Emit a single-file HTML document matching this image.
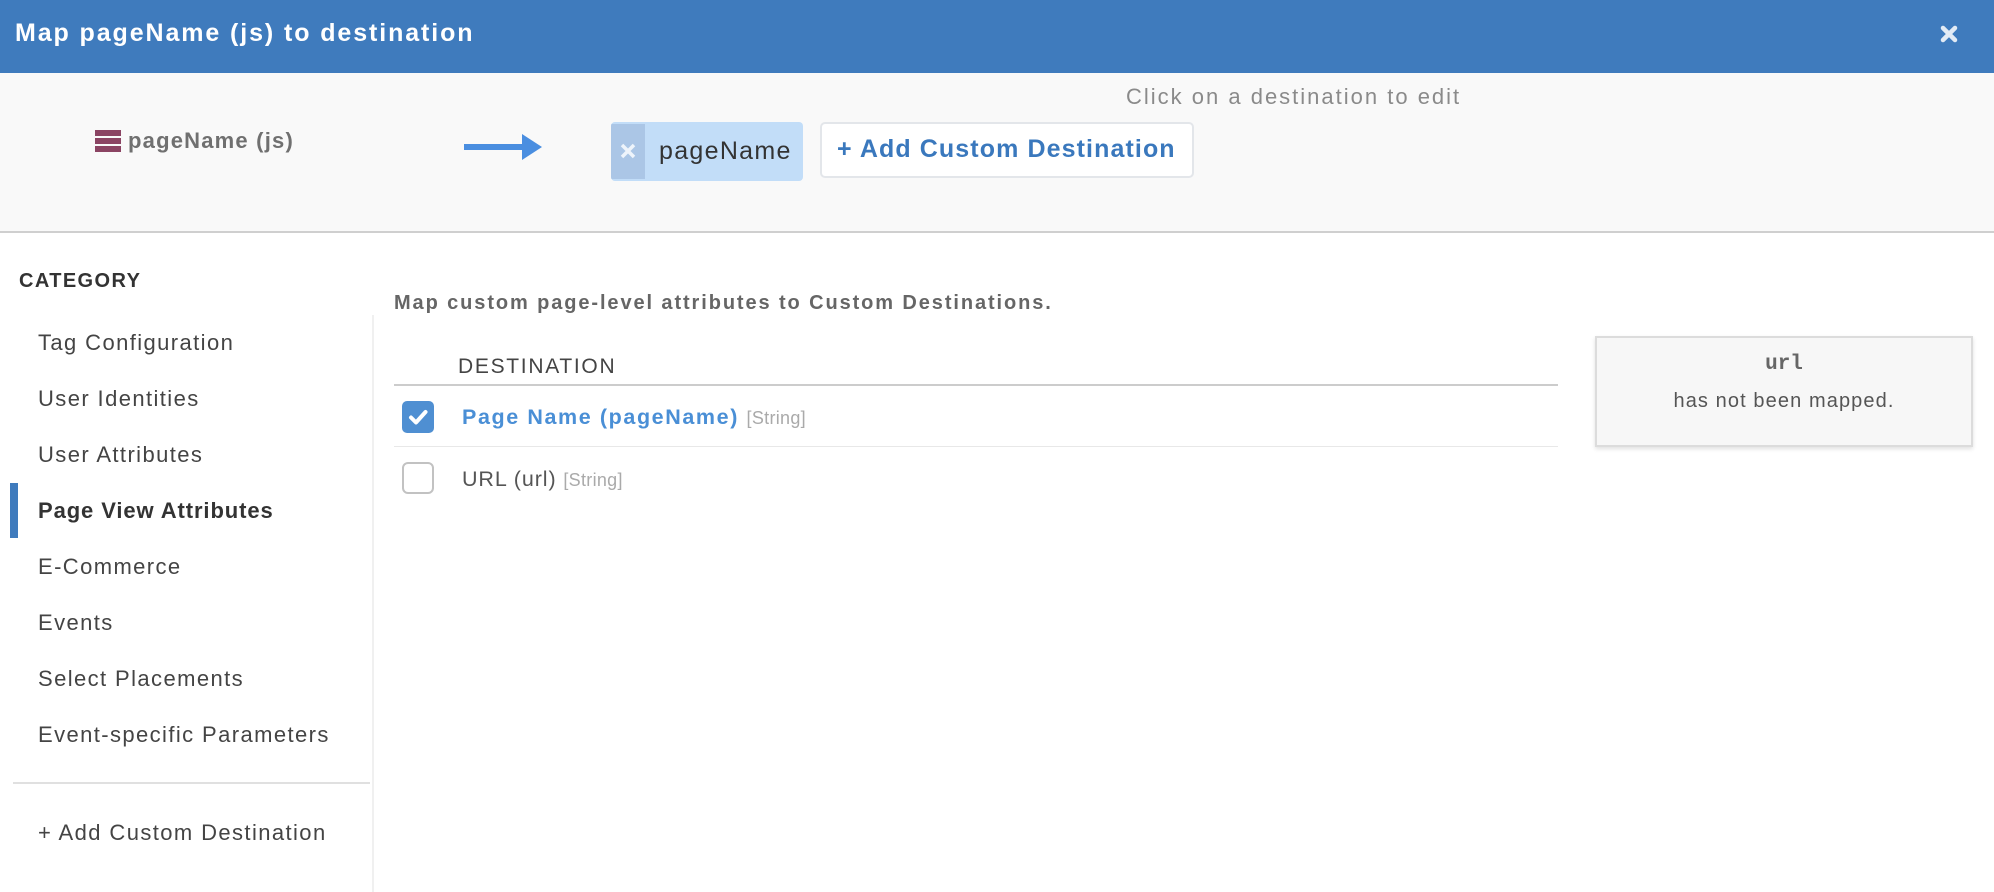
<!DOCTYPE html>
<html><head><meta charset="utf-8"><style>
*{margin:0;padding:0;box-sizing:border-box}
body{width:1994px;height:892px;background:#fff;font-family:"Liberation Sans",Arial,sans-serif;position:relative;overflow:hidden;color:#444}
.a{position:absolute;white-space:nowrap}
.hdr{left:0;top:0;width:1994px;height:73px;background:#3f7bbd}
.top{left:0;top:73px;width:1994px;height:160px;background:#f9f9f9;border-bottom:2px solid #cfcfcf}
.nav{font-size:22px;color:#444;left:38px;line-height:28px;letter-spacing:1.4px}
</style></head><body>
<div class="a hdr"></div>
<div class="a" style="left:15px;top:19px;font-size:25px;color:#fff;font-weight:bold;letter-spacing:1.9px">Map pageName (js) to destination</div>
<svg class="a" style="left:1940px;top:25px" width="18" height="18" viewBox="0 0 18 18"><path d="M3 3L15 15M15 3L3 15" stroke="#fff" stroke-width="4.5" stroke-linecap="round" opacity="0.85"/></svg>

<div class="a top"></div>
<div class="a" style="left:1126px;top:84px;font-size:22px;color:#8a8a8a;letter-spacing:2px">Click on a destination to edit</div>
<div class="a" style="left:95px;top:130px;width:26px;height:6px;background:#8b4463"></div>
<div class="a" style="left:95px;top:138px;width:26px;height:6px;background:#8b4463"></div>
<div class="a" style="left:95px;top:146px;width:26px;height:6px;background:#8b4463"></div>
<div class="a" style="left:128px;top:128px;font-size:22px;color:#707070;font-weight:bold;letter-spacing:1.2px">pageName (js)</div>
<svg class="a" style="left:464px;top:132px" width="78" height="30" viewBox="0 0 78 30"><rect x="0" y="12" width="60" height="6" fill="#4a8ee0"/><path d="M58 2L78 15L58 28Z" fill="#4a8ee0"/></svg>
<div class="a" style="left:611px;top:122px;width:192px;height:59px;background:#c2ddf8;border-radius:4px;overflow:hidden">
<div class="a" style="left:0;top:2px;width:34px;height:55px;background:#abc6e6"></div>
<svg class="a" style="left:9px;top:21px" width="16" height="16" viewBox="0 0 16 16"><path d="M2 2L14 14M14 2L2 14" stroke="#eef4fb" stroke-width="3.5"/></svg>
<div class="a" style="left:48px;top:15px;font-size:25px;color:#333;letter-spacing:1.3px">pageName</div>
</div>
<div class="a" style="left:820px;top:122px;width:374px;height:56px;background:#fff;border:2px solid #e3e6ea;border-radius:5px"></div>
<div class="a" style="left:837px;top:135px;font-size:25px;color:#3a78bd;font-weight:bold;letter-spacing:1.1px">+ Add Custom Destination</div>

<div class="a" style="left:19px;top:270px;font-size:20px;color:#333;font-weight:bold;letter-spacing:1.4px">CATEGORY</div>
<div class="a" style="left:372px;top:315px;width:2px;height:577px;background:#f0f0f0"></div>
<div class="a nav" style="top:329px">Tag Configuration</div>
<div class="a nav" style="top:385px">User Identities</div>
<div class="a nav" style="top:441px">User Attributes</div>
<div class="a" style="left:10px;top:483px;width:8px;height:55px;background:#3f7bbd"></div>
<div class="a nav" style="top:497px;font-weight:bold;color:#333;letter-spacing:0.9px">Page View Attributes</div>
<div class="a nav" style="top:553px">E-Commerce</div>
<div class="a nav" style="top:609px">Events</div>
<div class="a nav" style="top:665px">Select Placements</div>
<div class="a nav" style="top:721px">Event-specific Parameters</div>
<div class="a" style="left:13px;top:782px;width:357px;height:2px;background:#e0e0e0"></div>
<div class="a nav" style="top:819px">+ Add Custom Destination</div>

<div class="a" style="left:394px;top:292px;font-size:20px;color:#666;font-weight:bold;letter-spacing:1.9px">Map custom page-level attributes to Custom Destinations.</div>
<div class="a" style="left:458px;top:355px;font-size:21px;color:#444;letter-spacing:1.7px">DESTINATION</div>
<div class="a" style="left:394px;top:384px;width:1164px;height:2px;background:#cccccc"></div>
<div class="a" style="left:402px;top:401px;width:32px;height:32px;background:#4f8fd2;border-radius:5px"></div>
<svg class="a" style="left:402px;top:401px" width="32" height="32" viewBox="0 0 32 32"><path d="M9 16.5L14 21.5L23.5 11" stroke="#fff" stroke-width="4" fill="none" stroke-linecap="round" stroke-linejoin="round"/></svg>
<div class="a" style="left:462px;top:405px;font-size:21.5px;color:#4a8fd6;font-weight:bold;letter-spacing:1.6px">Page Name (pageName) <span style="font-weight:normal;color:#aaa;font-size:18px;letter-spacing:0.3px">[String]</span></div>
<div class="a" style="left:394px;top:446px;width:1164px;height:1px;background:#e8e8e8"></div>
<div class="a" style="left:402px;top:462px;width:32px;height:32px;border:2px solid #c2c2c2;border-radius:6px;background:#fff"></div>
<div class="a" style="left:462px;top:467px;font-size:21.5px;color:#555;letter-spacing:0.9px">URL (url) <span style="color:#aaa;font-size:18px;letter-spacing:0.3px">[String]</span></div>

<div class="a" style="left:1595px;top:336px;width:378px;height:111px;background:#f7f7f7;border:2px solid #dcdcdc;box-shadow:0 2px 4px rgba(0,0,0,0.12)"></div>
<div class="a" style="left:1595px;top:353px;width:378px;text-align:center;font-family:'Liberation Mono',monospace;font-weight:bold;font-size:21px;color:#666">url</div>
<div class="a" style="left:1595px;top:390px;width:378px;text-align:center;font-size:20px;color:#555;letter-spacing:1.1px">has not been mapped.</div>
</body></html>
